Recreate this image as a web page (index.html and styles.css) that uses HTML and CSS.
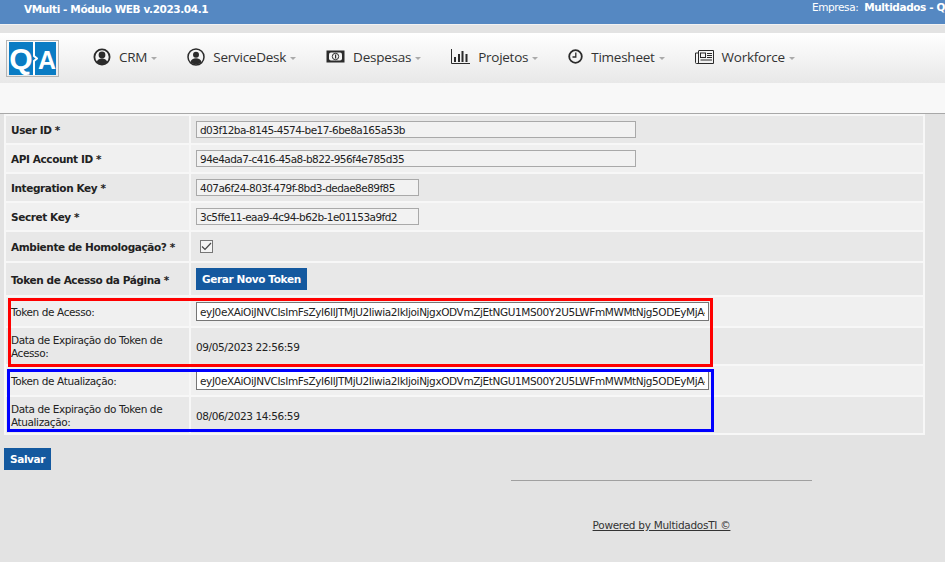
FILE: index.html
```html
<!DOCTYPE html>
<html lang="pt-BR">
<head>
  <meta charset="UTF-8" />
  <meta name="viewport" content="width=device-width, initial-scale=1.0"/>
  <title>VMulti - Módulo WEB</title>
  <link rel="stylesheet" href="styles.css">
</head>
<body>
  <div class="topbar">
    <div class="app-name">VMulti - Módulo WEB v.2023.04.1</div>
    <div class="company">Empresa:&nbsp; <strong>Multidados - QA Consultoria</strong></div>
  </div>

  <header class="menu">
    <div class="logo">
      <span class="logo-q">Q</span>
      <svg class="logo-brace" width="5" height="33" viewBox="0 0 5 33"><path d="M1 0v14l3 2.500-3 2.500v14" fill="none" stroke="#fff" stroke-width="2"/></svg>
      <span class="logo-a">A</span>
    </div>
    <nav>
      <a href="#">
        <svg class="icon" width="18" height="18" viewBox="0 0 18 18"><circle cx="9" cy="9" r="7.600" fill="none" stroke="#2b2b2b" stroke-width="1.800"/><circle cx="9" cy="7" r="3.400" fill="#2b2b2b"/><path d="M3.600 14c1-2.600 3-3.600 5.400-3.600s4.400 1 5.400 3.600c-1.400 1.500-3.300 2.400-5.400 2.400s-4-.9-5.400-2.400z" fill="#2b2b2b"/></svg>
        CRM <i class="caret"></i>
      </a>
      <a href="#">
        <svg class="icon" width="18" height="18" viewBox="0 0 18 18"><circle cx="9" cy="9" r="8" fill="none" stroke="#2b2b2b" stroke-width="1.500"/><circle cx="9" cy="6.800" r="3" fill="#2b2b2b"/><path d="M3.500 14.200c.6-2.800 2.800-3.900 5.500-3.900s4.900 1.100 5.500 3.900c-1.400 1.400-3.300 2.200-5.500 2.200s-4.100-.8-5.500-2.200z" fill="#2b2b2b"/></svg>
        ServiceDesk <i class="caret"></i>
      </a>
      <a href="#">
        <svg class="icon" width="19" height="14" viewBox="0 0 19 14"><rect x=".5" y=".5" width="18" height="12" fill="#2b2b2b"/><rect x="3" y="2.500" width="13" height="8" rx="2" fill="#f4f4f4"/><circle cx="9.500" cy="6.500" r="3.200" fill="#f4f4f4" stroke="#2b2b2b"/><path d="M9 4.500h1.200v4H9z" fill="#2b2b2b"/></svg>
        Despesas <i class="caret"></i>
      </a>
      <a href="#">
        <svg class="icon" width="19" height="15" viewBox="0 0 19 15"><path d="M.5 0v14.500H19" fill="none" stroke="#2b2b2b"/><path d="M3 8h2v5H3zM7 5h2v8H7zM10.500 2h2v11h-2zM14.500 5h2v8h-2z" fill="#2b2b2b"/></svg>
        Projetos <i class="caret"></i>
      </a>
      <a href="#">
        <svg class="icon" width="15" height="15" viewBox="0 0 15 15"><circle cx="7.500" cy="7.500" r="6.300" fill="none" stroke="#2b2b2b" stroke-width="1.800"/><path d="M7.800 3.500v4.500H4.500" fill="none" stroke="#2b2b2b" stroke-width="1.300"/></svg>
        Timesheet <i class="caret"></i>
      </a>
      <a href="#">
        <svg class="icon" width="19" height="14" viewBox="0 0 19 14"><path d="M3.500.5h15v13H1.500a1 1 0 0 1-1-1V3h3" fill="none" stroke="#2b2b2b"/><path d="M3.500 1v12" stroke="#2b2b2b"/><rect x="5.500" y="3" width="5" height="4.500" fill="none" stroke="#2b2b2b"/><path d="M12 3.500h5M12 5.500h5M12 7.500h5M5.500 10h11.500" stroke="#2b2b2b"/></svg>
        Workforce <i class="caret"></i>
      </a>
    </nav>
  </header>

  <div class="subbar"></div>

  <main>
    <div class="form-wrap">
      <table class="form-table">
        <colgroup><col class="col-label"><col></colgroup>
        <tr class="h27 even">
          <td><b>User ID <span class="req">*</span></b></td>
          <td><input class="field wide" type="text" value="d03f12ba-8145-4574-be17-6be8a165a53b"></td>
        </tr>
        <tr class="h27 odd">
          <td><b>API Account ID <span class="req">*</span></b></td>
          <td><input class="field wide" type="text" value="94e4ada7-c416-45a8-b822-956f4e785d35"></td>
        </tr>
        <tr class="h27 even">
          <td><b>Integration Key <span class="req">*</span></b></td>
          <td><input class="field short" type="text" value="407a6f24-803f-479f-8bd3-dedae8e89f85"></td>
        </tr>
        <tr class="h27 odd">
          <td><b>Secret Key <span class="req">*</span></b></td>
          <td><input class="field short" type="text" value="3c5ffe11-eaa9-4c94-b62b-1e01153a9fd2"></td>
        </tr>
        <tr class="h29 even">
          <td><b>Ambiente de Homologação? <span class="req">*</span></b></td>
          <td><span class="check"><svg width="11" height="9" viewBox="0 0 11 9"><path d="M1 4.500l3 3L10 1" fill="none" stroke="#444" stroke-width="1.200"/></svg></span></td>
        </tr>
        <tr class="h32 even">
          <td><b>Token de Acesso da Página <span class="req">*</span></b></td>
          <td><button class="btn btn-token" type="button">Gerar Novo Token</button></td>
        </tr>
        <tr class="h29 odd">
          <td>Token de Acesso:</td>
          <td><input class="field token" type="text" value="eyJ0eXAiOiJNVCIsImFsZyI6IlJTMjU2Iiwia2lkIjoiNjgxODVmZjEtNGU1MS00Y2U5LWFmMWMtNjg5ODEyMjA4ZTk1In0"></td>
        </tr>
        <tr class="h36 even">
          <td>Data de Expiração do Token de Acesso:</td>
          <td>09/05/2023 22:56:59</td>
        </tr>
        <tr class="h29 odd">
          <td>Token de Atualização:</td>
          <td><input class="field token" type="text" value="eyJ0eXAiOiJNVCIsImFsZyI6IlJTMjU2Iiwia2lkIjoiNjgxODVmZjEtNGU1MS00Y2U5LWFmMWMtNjg5ODEyMjA4ZTk1In0"></td>
        </tr>
        <tr class="h36 even">
          <td>Data de Expiração do Token de Atualização:</td>
          <td>08/06/2023 14:56:59</td>
        </tr>
      </table>
      <div class="mark mark-red"></div>
      <div class="mark mark-blue"></div>
    </div>

    <button class="btn btn-save" type="button">Salvar</button>

    <footer>
      <hr>
      <a href="#">Powered by MultidadosTI ©</a>
    </footer>
  </main>
</body>
</html>
```

FILE: styles.css
```css
html, body {
  height: 100%;
  overflow: hidden;
}
body {
  margin: 0;
  font-family: "DejaVu Sans", Verdana, sans-serif;
  font-size: 10.500px;
  letter-spacing: -0.4px;
  color: #222;
  background-color: #e3e3e3;
}

.topbar {
  display: flex;
  justify-content: space-between;
  height: 24px;
  padding-left: 24px;
  background-color: #5588c2;
  border-bottom: 1px solid #f2f2f2;
  color: #fff;
  overflow: hidden;
  white-space: nowrap;
}
.app-name {
  font-weight: bold;
  line-height: 19px;
}
.company {
  width: 133px;
  flex: none;
  line-height: 15px;
}

.menu {
  display: flex;
  align-items: center;
  height: 50px;
  margin-top: 8px;
  background: linear-gradient(#ffffff, #e8e8e8);
}
.logo {
  display: flex;
  width: 47px;
  height: 33px;
  margin: 1px 0 0 6px;
  border: 1px solid #b5b5b5;
  padding: 1px 2px;
  background: linear-gradient(#0a7cc4, #0a7cc4) content-box;
}
.logo span {
  display: block;
  height: 33px;
  color: #fff;
  font-family: "Liberation Sans", sans-serif;
  font-weight: bold;
  letter-spacing: 0;
  text-align: center;
}
.logo-q {
  width: 24px;
  font-size: 30px;
  line-height: 34px;
}
.logo-a {
  width: 18px;
  font-size: 25px;
  line-height: 36px;
}
.logo-brace {
  flex: none;
}

nav {
  display: flex;
  margin: -3px 0 0 34px;
}
nav a {
  display: flex;
  align-items: center;
  margin-right: 30px;
  text-decoration: none;
  color: #333;
  font-family: "Open Sans", sans-serif;
  font-size: 13.500px;
  letter-spacing: -0.25px;
}
.icon {
  margin-right: 8px;
}
.caret {
  display: inline-block;
  margin: 3px 0 0 4px;
  border-top: 3px solid #aaa;
  border-left: 3px solid transparent;
  border-right: 3px solid transparent;
}

.subbar {
  height: 30px;
  background-color: #f8f8f8;
  border-bottom: 1px solid #a8a8a8;
}

main {
  padding: 0 4px;
}
.form-wrap {
  position: relative;
  width: 921px;
}
.form-table {
  width: 921px;
  table-layout: fixed;
  border-collapse: separate;
  border-spacing: 2px;
  background-color: #f7f7f7;
  line-height: 13px;
}
.col-label {
  width: 183px;
}
.form-table td {
  padding: 2px 5px 0;
}
.even td { background-color: #e8e8e8; }
.odd td { background-color: #f0f0f0; }
.h27 { height: 27px; }
.h29 { height: 29px; }
.h32 { height: 32px; }
.h36 { height: 36px; }

.field {
  display: block;
  height: 17px;
  margin-top: -2px;
  padding: 0 3px;
  box-sizing: border-box;
  border: 1px solid #a9a9a9;
  background-color: #f2f2f2;
  font-family: "DejaVu Sans", Verdana, sans-serif;
  font-size: 10.500px;
  letter-spacing: -0.55px;
  color: #222;
}
.wide { width: 440px; }
.short { width: 223px; }
.token {
  width: 513px;
  height: 19px;
  border-color: #767676;
  background-color: #fff;
  letter-spacing: -0.39px;
}
.check {
  display: flex;
  align-items: center;
  justify-content: center;
  width: 11px;
  height: 11px;
  margin: -2px 0 0 4px;
  border: 1px solid #767676;
  background-color: #f4f4f4;
}
.btn {
  display: block;
  height: 22px;
  padding: 0 6px;
  border: none;
  background-color: #14599f;
  color: #fff;
  font-family: "DejaVu Sans", Verdana, sans-serif;
  font-size: 10.500px;
  letter-spacing: -0.38px;
  font-weight: bold;
}
.btn-token {
  margin-top: -2px;
}
.btn-save {
  margin-top: 13px;
}

.mark {
  position: absolute;
  box-sizing: border-box;
  border: 3px solid;
  pointer-events: none;
}
.mark-red {
  left: 4px;
  top: 184px;
  width: 705px;
  height: 69px;
  border-color: #ff0000;
}
.mark-blue {
  left: 3px;
  top: 255px;
  width: 707px;
  height: 63px;
  border-color: #0000ff;
}

footer {
  width: 301px;
  margin: 10px 0 0 507px;
  text-align: center;
}
footer hr {
  height: 1px;
  margin: 0 0 38px;
  border: none;
  background-color: #a0a0a0;
}
footer a {
  color: #333;
  letter-spacing: -0.28px;
}
```
